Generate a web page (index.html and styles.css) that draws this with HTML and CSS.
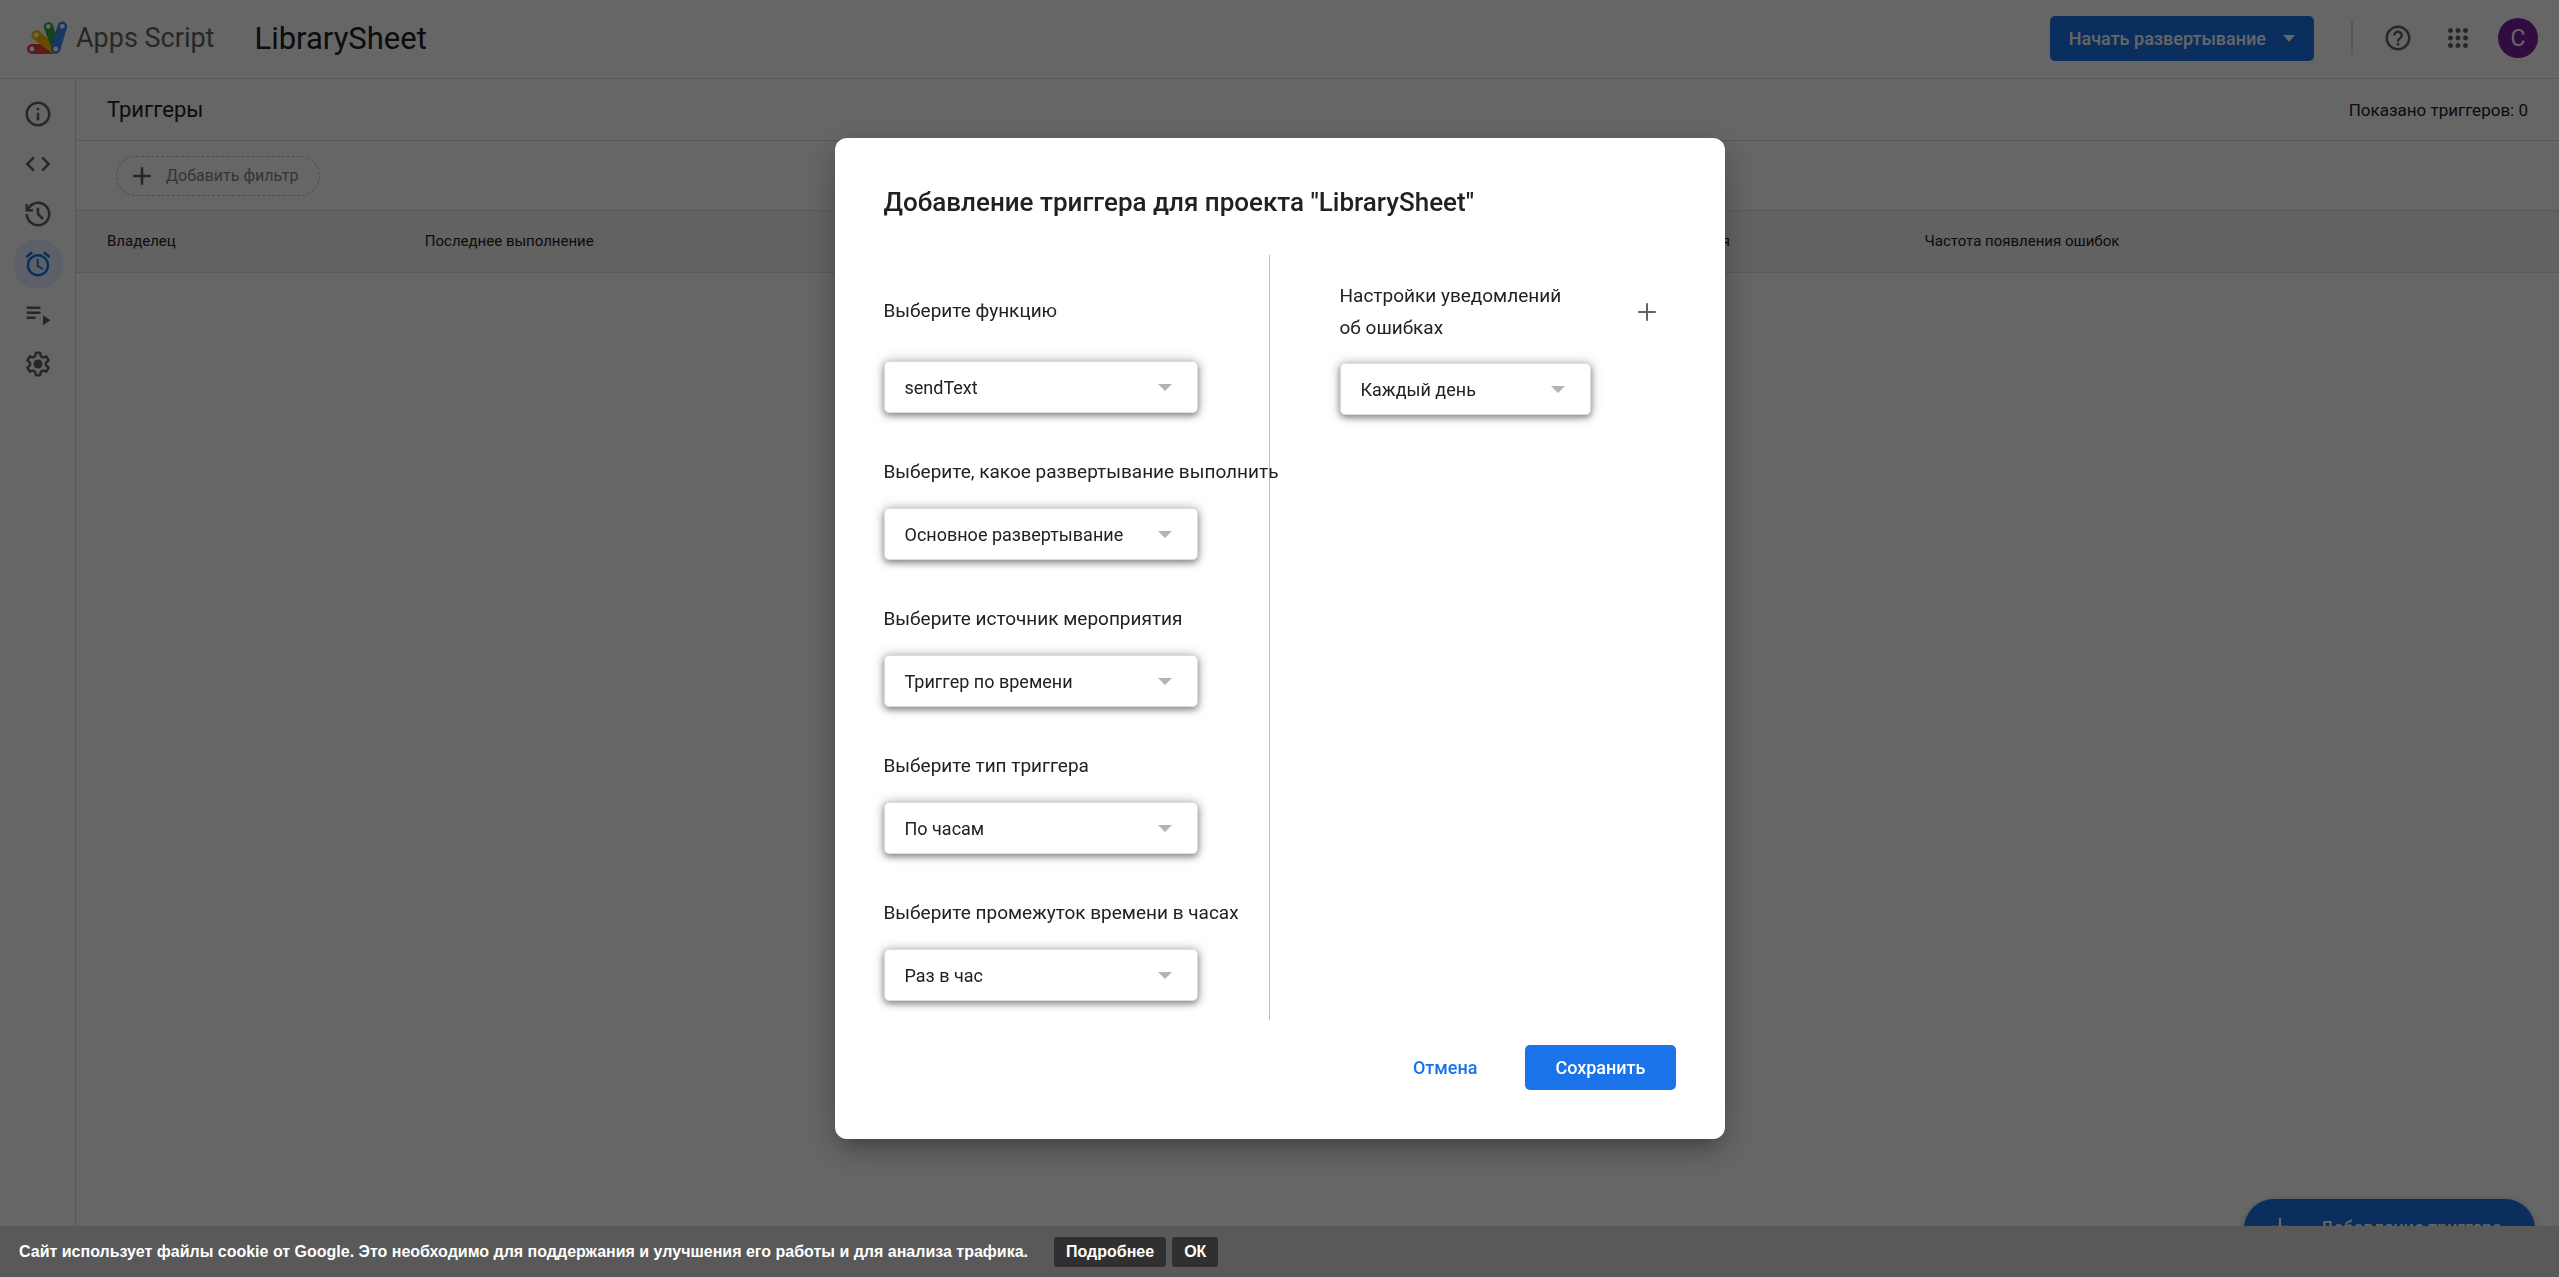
FILE: index.html
```html
<!DOCTYPE html>
<html lang="ru">
<head>
  <meta charset="UTF-8">
  <title>LibrarySheet - Триггеры - Apps Script</title>
  <meta name="viewport" content="width=device-width, initial-scale=1.0">
  <link rel="stylesheet" href="styles.css">
</head>

<body>

<div class="app">
  <header class="topbar">
    <a class="logo" href="#">
      <svg width="41" height="34" viewBox="0 0 41 34">
        <path fill="#ea4335" d="M5 23h22v10H5a5 5 0 0 1 0-10z"/>
        <path fill="#fbbc04" d="M6 17.8a5 5 0 0 1 6.3-7.7L29 25l-3 8z"/>
        <path fill="#34a853" d="M16.8 6.8a4.8 4.8 0 0 1 9.1-2.8L32 22l-6 9z"/>
        <path stroke="#4285f4" stroke-width="9.6" stroke-linecap="round" d="M35.3 5.3 28.7 28"/>
        <g fill="#fff">
          <circle cx="5" cy="28" r="2.4"/>
          <circle cx="9.3" cy="14" r="2.4"/>
          <circle cx="21.3" cy="5.3" r="2.4"/>
          <circle cx="35.3" cy="5.3" r="2.4"/>
          <circle cx="28.7" cy="28" r="2.4"/>
        </g>
      </svg>
      <span>Apps Script</span>
    </a>
    <h1 class="project-name">LibrarySheet</h1>

    <div class="topbar-actions">
      <button class="btn btn-deploy">Начать развертывание <span class="caret"></span></button>
      <span class="separator"></span>
      <button class="icon-btn" aria-label="Справка">
        <svg width="30" height="30" viewBox="0 0 24 24"><path d="M11 18h2v-2h-2v2zm1-16C6.48 2 2 6.48 2 12s4.48 10 10 10 10-4.48 10-10S17.52 2 12 2zm0 18c-4.41 0-8-3.59-8-8s3.59-8 8-8 8 3.59 8 8-3.59 8-8 8zm0-14c-2.21 0-4 1.79-4 4h2c0-1.1.9-2 2-2s2 .9 2 2c0 2-3 1.75-3 5h2c0-2.25 3-2.5 3-5 0-2.21-1.79-4-4-4z"/></svg>
      </button>
      <button class="icon-btn" aria-label="Приложения Google">
        <svg width="30" height="30" viewBox="0 0 24 24"><path d="M6 8c1.1 0 2-.9 2-2s-.9-2-2-2-2 .9-2 2 .9 2 2 2zm6 12c1.1 0 2-.9 2-2s-.9-2-2-2-2 .9-2 2 .9 2 2 2zm-6 0c1.1 0 2-.9 2-2s-.9-2-2-2-2 .9-2 2 .9 2 2 2zm0-6c1.1 0 2-.9 2-2s-.9-2-2-2-2 .9-2 2 .9 2 2 2zm6 0c1.1 0 2-.9 2-2s-.9-2-2-2-2 .9-2 2 .9 2 2 2zm4-8c0 1.1.9 2 2 2s2-.9 2-2-.9-2-2-2-2 .9-2 2zm-4 2c1.1 0 2-.9 2-2s-.9-2-2-2-2 .9-2 2 .9 2 2 2zm6 6c1.1 0 2-.9 2-2s-.9-2-2-2-2 .9-2 2 .9 2 2 2zm0 6c1.1 0 2-.9 2-2s-.9-2-2-2-2 .9-2 2 .9 2 2 2z"/></svg>
      </button>
      <button class="avatar">C</button>
    </div>
  </header>

  <div class="body">
    <nav class="sidebar">
      <a href="#" aria-label="Обзор">
        <svg width="30" height="30" viewBox="0 0 24 24"><path d="M11 7h2v2h-2zm0 4h2v6h-2zm1-9C6.48 2 2 6.48 2 12s4.48 10 10 10 10-4.48 10-10S17.52 2 12 2zm0 18c-4.41 0-8-3.59-8-8s3.59-8 8-8 8 3.59 8 8-3.59 8-8 8z"/></svg>
      </a>
      <a href="#" aria-label="Редактор">
        <svg width="30" height="30" viewBox="0 0 24 24"><path d="M9.4 16.6 4.8 12l4.6-4.6L8 6l-6 6 6 6 1.4-1.4zm5.2 0 4.6-4.6-4.6-4.6L16 6l6 6-6 6-1.4-1.4z"/></svg>
      </a>
      <a href="#" aria-label="История версий">
        <svg width="30" height="30" viewBox="0 0 24 24"><path d="M12.2 2C8.6 2 5.5 3.8 3.8 6.500V4H2v6h6V8H5.200C6.600 5.600 9.200 4 12.200 4c4.300 0 7.800 3.600 7.800 8s-3.500 8-7.800 8S4 16.400 4 12H2c0 5.500 4.600 10 10.200 10C17.600 22 22 17.500 22 12S17.600 2 12.200 2zM11 7v5.400l4.300 4.300 1.400-1.400-3.700-3.700V7z"/></svg>
      </a>
      <a href="#" class="active" aria-label="Триггеры">
        <svg width="30" height="30" viewBox="0 0 24 24"><path d="M12.500 8H11v6l4.750 2.850.75-1.230-4-2.370zm4.837-6.190 4.607 3.845-1.280 1.535-4.610-3.843zm-10.674 0 1.282 1.536L3.337 7.190l-1.280-1.536zM12 4c-4.970 0-9 4.030-9 9s4.030 9 9 9 9-4.030 9-9-4.030-9-9-9zm0 16c-3.860 0-7-3.140-7-7s3.140-7 7-7 7 3.140 7 7-3.140 7-7 7z"/></svg>
      </a>
      <a href="#" aria-label="Количество выполнений">
        <svg width="30" height="30" viewBox="0 0 24 24"><path d="M3 10h11v2H3zm0-4h11v2H3zm0 8h7v2H3zm13-1v8l6-4z"/></svg>
      </a>
      <a href="#" aria-label="Настройки проекта">
        <svg width="30" height="30" viewBox="0 0 24 24"><path fill="none" stroke="#5f6368" stroke-width="2" stroke-linejoin="round" d="m10.300 3-.5 2.700-1.900 1.100-2.500-.9-1.900 3.200 2.100 1.800v2.200l-2.100 1.800 1.900 3.200 2.500-.9 1.900 1.100.5 2.700h3.400l.5-2.700 1.900-1.100 2.500.9 1.900-3.200-2.100-1.800v-2.200l2.100-1.800-1.900-3.200-2.500.9-1.900-1.100-.5-2.700z"/><circle cx="12" cy="12" r="3.600"/></svg>
      </a>
    </nav>

    <main class="content">
      <div class="title-row">
        <h2>Триггеры</h2>
        <span class="count">Показано триггеров: 0</span>
      </div>
      <div class="filter-row">
        <button class="chip">
          <svg width="30" height="30" viewBox="0 0 24 24"><path d="M19 13h-6v6h-2v-6H5v-2h6V5h2v6h6v2z"/></svg>
          Добавить фильтр
        </button>
      </div>
      <table class="triggers">
        <thead>
          <tr>
            <th class="col-owner">Владелец</th>
            <th class="col-wide">Последнее выполнение</th>
            <th class="col-wide">Развертывание</th>
            <th class="col-wide">Мероприятие</th>
            <th class="col-function">Функция</th>
            <th>Частота появления ошибок</th>
          </tr>
        </thead>
      </table>
    </main>
  </div>

  <button class="fab">
    <svg width="28" height="28" viewBox="0 0 24 24"><path d="M20 13h-7v7h-2v-7H4v-2h7V4h2v7h7v2z"/></svg>
    Добавление триггера
  </button>
</div>

<div class="overlay">
  <form class="dialog" role="dialog" aria-labelledby="dialog-title">
    <h2 id="dialog-title">Добавление триггера для проекта "LibrarySheet"</h2>

    <div class="columns">
      <div class="settings">
        <div class="field field-first">
          <label for="function">Выберите функцию</label>
          <div class="select"><select id="function"><option>sendText</option></select></div>
        </div>
        <div class="field">
          <label for="deployment">Выберите, какое развертывание выполнить</label>
          <div class="select"><select id="deployment"><option>Основное развертывание</option></select></div>
        </div>
        <div class="field">
          <label for="source">Выберите источник мероприятия</label>
          <div class="select"><select id="source"><option>Триггер по времени</option></select></div>
        </div>
        <div class="field">
          <label for="type">Выберите тип триггера</label>
          <div class="select"><select id="type"><option>По часам</option></select></div>
        </div>
        <div class="field">
          <label for="interval">Выберите промежуток времени в часах</label>
          <div class="select"><select id="interval"><option>Раз в час</option></select></div>
        </div>
      </div>

      <div class="notifications">
        <div class="notifications-head">
          <label for="notify">Настройки уведомлений об ошибках</label>
          <button type="button" class="icon-btn" aria-label="Добавить уведомление">
            <svg width="30" height="30" viewBox="0 0 24 24"><path d="M19 12.800h-6.200V19h-1.600v-6.200H5v-1.600h6.200V5h1.600v6.200H19z"/></svg>
          </button>
        </div>
        <div class="select select-small"><select id="notify"><option>Каждый день</option></select></div>
      </div>
    </div>

    <div class="dialog-actions">
      <button type="button" class="btn btn-text">Отмена</button>
      <button type="button" class="btn btn-save">Сохранить</button>
    </div>
  </form>
</div>

<div class="cookie-bar">
  <span>Сайт использует файлы cookie от Google. Это необходимо для поддержания и улучшения его работы и для анализа трафика.</span>
  <a href="#">Подробнее</a>
  <button>ОК</button>
</div>

</body>
</html>
```
FILE: styles.css
```css
* {
  margin: 0;
  padding: 0;
  box-sizing: border-box;
}

body {
  font-family: Roboto, "Liberation Sans", sans-serif;
  color: #202124;
  background: #fff;
  overflow: hidden;
}

a {
  color: inherit;
  text-decoration: none;
}

button {
  font: inherit;
  border: none;
  background: none;
  cursor: pointer;
}

svg {
  display: block;
  fill: #5f6368;
  flex: none;
}

.app {
  height: 100vh;
  display: flex;
  flex-direction: column;
}

/* top bar */
.topbar {
  display: flex;
  align-items: center;
  height: 79px;
  padding: 0 21px 2px 27px;
  border-bottom: 1px solid #dadce0;
}

.logo {
  display: flex;
  align-items: center;
  gap: 8px;
  font-size: 27px;
  color: #5f6368;
}

.logo svg {
  fill: none;
}

.project-name {
  margin-left: 40px;
  font-size: 31px;
  font-weight: 400;
}

.topbar-actions {
  display: flex;
  align-items: center;
  margin-left: auto;
}

.btn {
  height: 45px;
  border-radius: 5px;
  font-size: 18px;
  font-weight: 500;
  white-space: nowrap;
}

.btn-deploy {
  display: flex;
  align-items: center;
  gap: 17px;
  padding: 0 19px;
  color: #fff;
  background: #1a73e8;
}

.caret {
  border: 6px solid transparent;
  border-top: 7px solid #fff;
  border-bottom: none;
}

.separator {
  width: 2px;
  height: 34px;
  margin: 0 20px 0 37px;
  background: #dadce0;
}

.icon-btn {
  padding: 10px;
}

.topbar .icon-btn {
  margin-right: 10px;
}

.avatar {
  width: 40px;
  height: 40px;
  margin-left: 5px;
  border-radius: 50%;
  color: #fff;
  background: #7b1fa2;
  font-size: 23px;
}

/* page body */
.body {
  flex: 1;
  display: flex;
}

.sidebar {
  width: 76px;
  padding-top: 10px;
  border-right: 1px solid #dadce0;
}

.sidebar a {
  display: flex;
  align-items: center;
  justify-content: center;
  width: 50px;
  height: 50px;
  margin: 0 auto;
  border-radius: 50%;
}

.sidebar .active {
  background: #e8f0fe;
}

.sidebar .active svg {
  fill: #1a73e8;
}

.content {
  flex: 1;
}

.title-row {
  display: flex;
  align-items: center;
  justify-content: space-between;
  height: 62px;
  padding: 0 31px;
  border-bottom: 1px solid #dadce0;
}

.title-row h2 {
  font-size: 22px;
  font-weight: 400;
}

.count {
  font-size: 17px;
}

.filter-row {
  display: flex;
  align-items: center;
  height: 70px;
  padding: 0 40px;
  border-bottom: 1px solid #dadce0;
}

.chip {
  display: flex;
  align-items: center;
  gap: 9px;
  height: 40px;
  padding: 0 21px 0 10px;
  border: 1px dashed #bdc1c6;
  border-radius: 20px;
  font-size: 16px;
  color: #80868b;
}

.triggers {
  width: 100%;
  border-collapse: collapse;
  table-layout: fixed;
}

.triggers th {
  height: 61px;
  padding: 0 31px;
  font-size: 15px;
  font-weight: 400;
  text-align: left;
  background: #f5f5f5;
  border-bottom: 1px solid #dadce0;
}

.col-owner {
  width: 12.8%;
}

.col-wide {
  width: 16.7%;
}

.col-function {
  width: 10.3%;
}

.fab {
  position: fixed;
  right: 24px;
  bottom: 18px;
  display: flex;
  align-items: center;
  gap: 26px;
  height: 60px;
  padding: 0 33px 4px 22px;
  border-radius: 30px;
  color: #fff;
  background: #1a73e8;
  font-size: 18px;
  font-weight: 500;
  box-shadow: 0 1px 4px rgba(60, 64, 67, 0.3), 0 4px 10px rgba(60, 64, 67, 0.15);
}

.fab svg {
  fill: #fff;
}

/* dialog */
.overlay {
  position: fixed;
  inset: 0;
  display: flex;
  align-items: center;
  justify-content: center;
  background: rgba(0, 0, 0, 0.6);
}

.dialog {
  width: 890px;
  max-width: 95%;
  padding: 49px;
  border-radius: 12px;
  background: #fff;
  box-shadow: 0 14px 19px -9px rgba(0, 0, 0, 0.2), 0 10px 38px 4px rgba(0, 0, 0, 0.14), 0 10px 30px rgba(0, 0, 0, 0.12);
}

.dialog h2 {
  margin-bottom: 37px;
  font-size: 26px;
  line-height: 31px;
  font-weight: 500;
}

.columns {
  display: flex;
}

.settings {
  width: 386px;
  padding-bottom: 19px;
  border-right: 1px solid #bdc1c6;
}

.field {
  padding-top: 43px;
}

.field-first {
  padding-top: 40px;
}

.field-first label {
  margin-bottom: 34px;
}

label {
  display: block;
  margin-bottom: 20px;
  font-size: 19px;
  line-height: 32px;
  white-space: nowrap;
}

.select {
  position: relative;
  width: 314px;
}

.select select {
  display: block;
  width: 100%;
  height: 52px;
  padding: 0 50px 0 20px;
  border: 1px solid #dadce0;
  border-radius: 5px;
  appearance: none;
  background: #fff;
  color: #202124;
  font: 400 18px Roboto, sans-serif;
  box-shadow: 0 3px 6px rgba(60, 64, 67, 0.5), 0 0 12px rgba(60, 64, 67, 0.35);
}

.select::after {
  content: "";
  position: absolute;
  top: 23px;
  right: 26px;
  border: 7px solid transparent;
  border-top-color: #b3b3b3;
  border-bottom: none;
  pointer-events: none;
}

.select-small {
  width: 251px;
}

.notifications {
  flex: 1;
  padding: 25px 4px 0 70px;
}

.notifications-head {
  display: flex;
  align-items: center;
  justify-content: space-between;
  margin-bottom: 19px;
}

.notifications-head label {
  width: 240px;
  margin: 0;
  white-space: normal;
}

.dialog-actions {
  display: flex;
  justify-content: flex-end;
  gap: 28px;
  margin-top: 25px;
}

.btn-text {
  padding: 0 20px;
  color: #1a73e8;
}

.btn-save {
  padding: 0 30px;
  color: #fff;
  background: #1a73e8;
}

/* cookie notice */
.cookie-bar {
  position: fixed;
  left: 0;
  right: 0;
  bottom: 0;
  display: flex;
  align-items: center;
  gap: 6px;
  height: 51px;
  padding: 1px 19px 0;
  background: #595959;
  color: #fff;
  font: bold 16px Arial, "Liberation Sans", sans-serif;
}

.cookie-bar span {
  margin-right: 20px;
}

.cookie-bar a,
.cookie-bar button {
  height: 30px;
  padding: 0 12px;
  border-radius: 3px;
  line-height: 30px;
  background: #303030;
  color: #fff;
}
```
